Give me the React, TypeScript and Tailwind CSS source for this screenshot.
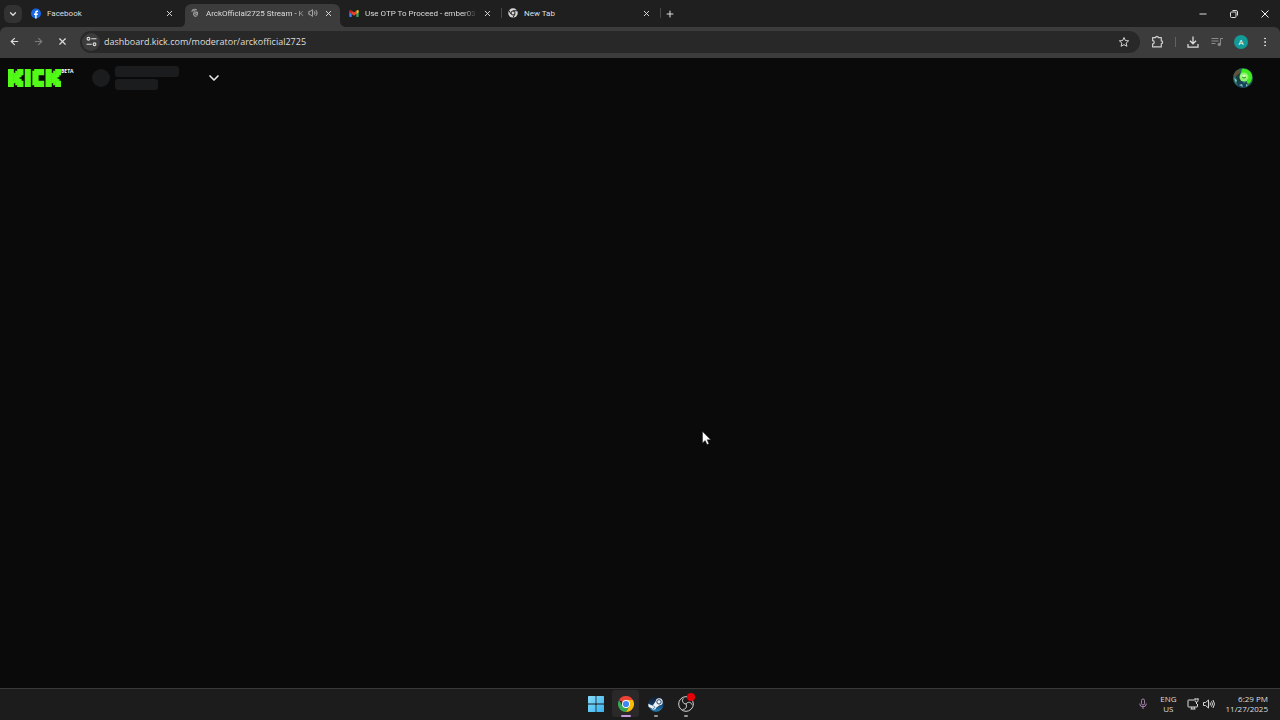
import type { ReactNode } from "react";
import {
  ArrowLeft,
  ArrowRight,
  ChevronDown,
  EllipsisVertical,
  Plus,
  Volume2,
  X,
} from "lucide-react";

function FacebookIcon() {
  return (
    <svg viewBox="0 0 20 20" className="size-[11px]">
      <circle cx="10" cy="10" r="10" fill="#1668e8" />
      <path
        d="M8.3 20v-6.8H6v-3h2.3V8.300c0-2.700 1.500-4.100 3.900-4.100.8 0 1.500.1 1.900.2v2.700h-1.400c-1.100 0-1.500.6-1.500 1.500v1.600h2.800l-.5 3h-2.300V20z"
        fill="#fff"
      />
    </svg>
  );
}

function LoadingPageIcon() {
  return (
    <svg viewBox="0 0 20 20" className="size-2.5" fill="none" stroke="#b8b8b8" strokeWidth="1.6">
      <path d="M4 8V5c2-3 7-3 10-1M5 5l4 1 2-3M8 8h7v4c0 3-2 5-4 5s-4-2-4-5z" />
      <path d="M8 12l6-3M9 15l5-3" />
    </svg>
  );
}

function GmailIcon() {
  return (
    <svg viewBox="0 0 24 18" className="h-[7px] w-2.5">
      <path d="M0 3v13q0 2 2 2h4V7z" fill="#4285f4" />
      <path d="M24 3v13q0 2-2 2h-4V7z" fill="#34a853" />
      <path d="M18 2l3-1.700q3-.7 3 2.700v3l-6 4.500z" fill="#fbbc04" />
      <path d="M6 2L3 .3Q0-.4 0 3v3l6 4.500z" fill="#c5221f" />
      <path d="M6 2l6 4.500L18 2v8.500L12 15l-6-4.500z" fill="#ea4335" />
    </svg>
  );
}

function ChromeMonoIcon() {
  return (
    <svg viewBox="0 0 20 20" className="size-2.5">
      <circle cx="10" cy="10" r="9.500" fill="#d6d6d6" />
      <circle cx="10" cy="10" r="4" fill="#d6d6d6" stroke="#1f1f1f" strokeWidth="2" />
      <path d="M10 5.500h8.500M6.100 12.300L1.900 5M13.900 12.300L9.700 19.500" stroke="#1f1f1f" strokeWidth="2" />
    </svg>
  );
}

function ChromeIcon() {
  return (
    <svg viewBox="0 0 48 48" className="size-4">
      <path d="M24 24L3.200 12A24 24 0 0 1 44.800 12z" fill="#ea4335" />
      <path d="M3.200 12A24 24 0 0 0 24 48l10.400-18L24 24 13.600 30z" fill="#34a853" />
      <path d="M44.800 12A24 24 0 0 1 24 48l10.400-18L24 12z" fill="#fbbc04" />
      <circle cx="24" cy="24" r="12" fill="#fff" />
      <circle cx="24" cy="24" r="9.300" fill="#4285f4" />
    </svg>
  );
}

function WindowsIcon() {
  return (
    <svg viewBox="0 0 16 16" className="size-4">
      <defs>
        <linearGradient id="win" gradientUnits="userSpaceOnUse" x1="0" y1="0" x2="16" y2="16">
          <stop offset="0" stopColor="#86dcfa" />
          <stop offset="1" stopColor="#39b2ee" />
        </linearGradient>
      </defs>
      <rect width="7.600" height="7.600" rx=".6" fill="url(#win)" />
      <rect x="8.400" width="7.600" height="7.600" rx=".6" fill="url(#win)" />
      <rect y="8.400" width="7.600" height="7.600" rx=".6" fill="url(#win)" />
      <rect x="8.400" y="8.400" width="7.600" height="7.600" rx=".6" fill="url(#win)" />
    </svg>
  );
}

function SteamIcon() {
  return (
    <svg viewBox="0 0 24 24" className="size-4">
      <defs>
        <linearGradient id="steam" x1="0" y1="0" x2="0" y2="1">
          <stop offset="0" stopColor="#141a26" />
          <stop offset=".5" stopColor="#123a63" />
          <stop offset="1" stopColor="#2684b8" />
        </linearGradient>
      </defs>
      <circle cx="12" cy="12" r="11.500" fill="url(#steam)" />
      <path d="M.5 11.500l6.500 3 4.500-6.500a5.300 5.300 0 1 1 6 6l-5 3.200q-.8 3.300-4 3.300-2.500 0-3.500-2.500l-4-1.500q-.7-2-.5-5z" fill="#eef3f7" />
      <circle cx="16.500" cy="8.800" r="3.300" fill="#eef3f7" stroke="#17365a" strokeWidth="1.400" />
      <path d="M7 18.500q2.500 1 3-1t-2-2.500" fill="none" stroke="#17547f" strokeWidth="1" />
    </svg>
  );
}

function ObsIcon() {
  return (
    <svg viewBox="0 0 24 24" className="size-4" fill="none" stroke="#d4d4d4" strokeWidth="1.500">
      <circle cx="12" cy="12" r="11" fill="#1b1b1d" />
      <path d="M12 12c-5-.5-6.500-5-4-8.500M12 12c3-4 7.500-3 9 1M12 12c2 4.500-.5 8.500-5 8" />
    </svg>
  );
}

/* Block logo drawn on a 28 x 9 cell grid: [x, y, width, height] */
const logoCells: number[][] = [
  [0, 0, 3, 9], [3, 2, 1, 5], [4, 1, 1, 7], [5, 0, 3, 3], [4, 3, 3, 1], [4, 4, 2, 1], [4, 5, 3, 1], [5, 6, 3, 3],
  [9, 0, 3, 9],
  [13, 1, 3, 7], [14, 0, 5, 3], [14, 6, 5, 3],
  [20, 0, 3, 9], [23, 2, 1, 5], [24, 1, 1, 7], [25, 0, 3, 3], [24, 3, 3, 1], [24, 4, 2, 1], [24, 5, 3, 1], [25, 6, 3, 3],
];

function KickLogo() {
  return (
    <svg viewBox="0 0 28 9" className="h-[18px] w-[53px]" preserveAspectRatio="none" role="img" aria-label="Kick">
      {logoCells.map(([x, y, w, h], i) => (
        <rect key={i} x={x} y={y} width={w} height={h} fill="#53fc18" stroke="#53fc18" strokeWidth=".25" />
      ))}
    </svg>
  );
}

function StreamerAvatar() {
  return (
    <svg viewBox="0 0 20 20" className="size-5 rounded-full">
      <rect width="20" height="20" fill="#27685f" />
      <path d="M0 2h7v6H0z" fill="#61523b" />
      <path d="M3 8l4-3 1 8-4 3z" fill="#1c3d3f" />
      <path d="M9 1c6-1 11 4 10 9s-3 6-6 6l2-6-4-3-4 2z" fill="#3fea1c" />
      <circle cx="11" cy="9" r="4.500" fill="#8cf56d" />
      <path d="M8 8q3-3 6 0l-1 2H9z" fill="#c9ffa5" />
      <path d="M9 9l2 1 2-1" stroke="#278b22" fill="none" />
      <path d="M5 15l4-2 2 3 3-2 2 6H4z" fill="#183e5c" />
      <path d="M1 10l3 2-1 3zM6 17l3-1 1 3zM13 16l2 1-2 2z" fill="#7cc6c0" />
    </svg>
  );
}

type TabProps = {
  icon: ReactNode;
  title: string;
  active?: boolean;
  audio?: boolean;
  fade?: boolean;
  divider?: boolean;
};

function Tab({ icon, title, active, audio, fade, divider }: TabProps) {
  return (
    <div className="relative flex h-full w-[159px] min-w-0 items-center pb-px">
      {active && (
        <svg viewBox="0 0 167 23" className="absolute bottom-0 -left-1 h-[23px] w-[167px]">
          <path d="M0 23q5 0 5-6V7q0-7 7-7h141q7 0 7 7v10q0 6 7 6z" fill="#3c3c3c" />
        </svg>
      )}
      <button role="tab" aria-selected={!!active} className="relative flex min-w-0 flex-1 items-center gap-1.5 pl-1.5">
        <span className="flex w-2.5 shrink-0 justify-center">{icon}</span>
        <span
          className={`min-w-0 flex-1 overflow-hidden pt-0.5 text-left whitespace-nowrap ${
            fade ? "[mask-image:linear-gradient(to_right,#000_88%,transparent)]" : ""
          }`}
        >
          {title}
        </span>
      </button>
      {audio && <Volume2 className="relative size-2.5 shrink-0 text-[#c8c8c8]" />}
      <button aria-label={`Close ${title}`} className="relative mr-2.5 ml-1.5 shrink-0">
        <X className="size-[9px]" strokeWidth={2.5} />
      </button>
      {divider && <span className="absolute right-0 h-2.5 w-px bg-[#484848]" />}
    </div>
  );
}

function ToolButton({ label, children }: { label: string; children: ReactNode }) {
  return (
    <button aria-label={label} className="flex size-6 shrink-0 items-center justify-center">
      {children}
    </button>
  );
}

function TabStrip() {
  return (
    <div className="flex h-[27px] items-center bg-[#1f1f1f] font-[Roboto,'Noto_Sans',sans-serif]">
      <button aria-label="Search tabs" className="mr-[3px] ml-1 flex h-[18px] w-[18px] items-center justify-center rounded-md bg-[#323232]">
        <ChevronDown className="size-2.5" strokeWidth={3} />
      </button>
      <div role="tablist" className="flex h-full min-w-0">
        <Tab icon={<FacebookIcon />} title="Facebook" />
        <Tab icon={<LoadingPageIcon />} title="ArckOfficial2725 Stream - K" active audio fade />
        <Tab icon={<GmailIcon />} title="Use OTP To Proceed - ember03" fade divider />
        <Tab icon={<ChromeMonoIcon />} title="New Tab" divider />
      </div>
      <button aria-label="New tab" className="ml-1">
        <Plus className="size-2.5" strokeWidth={2.5} />
      </button>
      <div className="ml-auto flex">
        <button aria-label="Minimize" className="flex w-[30px] justify-center">
          <svg viewBox="0 0 8 8" className="size-2"><path d="M.5 4h7" stroke="#ddd" /></svg>
        </button>
        <button aria-label="Restore" className="flex w-[31px] justify-center">
          <svg viewBox="0 0 8 8" className="size-2" fill="none" stroke="#ddd">
            <rect x=".5" y="2" width="5.500" height="5.500" rx="1" />
            <path d="M2.500.5H6q1.500 0 1.500 1.500v3.500" />
          </svg>
        </button>
        <button aria-label="Close window" className="flex w-[31px] justify-center">
          <svg viewBox="0 0 8 8" className="size-2"><path d="M.5.5l7 7M7.500.5l-7 7" stroke="#f0f0f0" /></svg>
        </button>
      </div>
    </div>
  );
}

function Toolbar() {
  return (
    <div className="bg-[#1f1f1f]">
      <div className="flex h-[31px] items-center rounded-t-md bg-[#3c3c3c] pr-[3px] pb-0.5 pl-0.5">
        <ToolButton label="Back"><ArrowLeft className="size-[11px]" strokeWidth={2.500} /></ToolButton>
        <ToolButton label="Forward"><ArrowRight className="size-[11px] text-[#7b7b7b]" strokeWidth={2.500} /></ToolButton>
        <ToolButton label="Stop loading"><X className="size-[11px]" strokeWidth={2.500} /></ToolButton>
        <div className="mr-[5px] ml-1.5 flex h-[22px] min-w-0 flex-1 items-center rounded-full bg-[#282828] pr-1 pl-0.5">
          <button aria-label="Site information" className="flex size-[18px] shrink-0 items-center justify-center rounded-full bg-[#3c3c3c]">
            <svg viewBox="0 0 20 20" className="size-[11px]" fill="none" stroke="#dedede" strokeWidth="2">
              <circle cx="4.500" cy="5" r="2.500" />
              <path d="M9.500 5H19M1 15h9.500" />
              <circle cx="15.500" cy="15" r="2.500" />
            </svg>
          </button>
          <input
            aria-label="Address"
            type="text"
            defaultValue="dashboard.kick.com/moderator/arckofficial2725"
            className="ml-1 min-w-0 flex-1 bg-transparent text-[9px] outline-none"
          />
          <ToolButton label="Bookmark this page">
            <svg viewBox="0 0 24 24" className="size-3" fill="none" stroke="#d4d4d4" strokeWidth="2">
              <path d="M12 3l2.700 6.100 6.600.6-5 4.400 1.500 6.500L12 17.200l-5.800 3.400 1.500-6.500-5-4.400 6.600-.6z" />
            </svg>
          </ToolButton>
        </div>
        <ToolButton label="Extensions">
          <svg viewBox="0 0 24 24" className="size-[13px]" fill="none" stroke="#cfcfcf" strokeWidth="2.200">
            <path d="M3 5h5.500a2.500 2.500 0 0 1 5 0H19v6a2.500 2.500 0 0 1 0 5v6H3v-5.500a3 3 0 0 0 0-6z" strokeLinejoin="round" />
          </svg>
        </ToolButton>
        <span className="mr-[5px] ml-1.5 h-2.5 w-px bg-[#626262]" />
        <ToolButton label="Downloads">
          <svg viewBox="0 0 24 24" className="size-3" fill="none" stroke="#dedede" strokeWidth="2.500">
            <path d="M12 1v14M6 9.500l6 6 6-6M2 16v6h20v-6" />
          </svg>
        </ToolButton>
        <ToolButton label="Media controls">
          <svg viewBox="0 0 24 24" className="size-3" fill="none" stroke="#8a8a8a" strokeWidth="2">
            <path d="M1 5h14M1 10h14M1 15h8M19 17V5h5" />
            <circle cx="16.500" cy="17" r="2.500" fill="#8a8a8a" />
          </svg>
        </ToolButton>
        <ToolButton label="Profile">
          <span className="flex size-[14px] items-center justify-center rounded-full bg-[#149a96] text-[8px] text-white">A</span>
        </ToolButton>
        <ToolButton label="Menu"><EllipsisVertical className="size-3" /></ToolButton>
      </div>
    </div>
  );
}

function Dashboard() {
  return (
    <main className="flex-1 bg-[#0a0a0a]">
      <header className="flex h-10 items-center pr-[27px] pl-2">
        <a href="#home" className="flex items-start">
          <KickLogo />
          <span className="text-[5px] leading-[5px] font-bold text-white">BETA</span>
        </a>
        <button aria-label="Select channel" className="ml-[18px] flex items-center">
          <span className="size-[18px] rounded-full bg-[#1b1c1e]" />
          <span className="ml-[5px] flex w-16 flex-col gap-0.5">
            <span className="h-[11px] w-16 rounded-[3px] bg-[#1b1c1e]" />
            <span className="h-[11px] w-[43px] rounded-[3px] bg-[#1b1c1e]" />
          </span>
          <ChevronDown className="ml-[27px] size-4 text-[#e6e6e6]" strokeWidth={2.500} />
        </button>
        <button aria-label="Account" className="ml-auto"><StreamerAvatar /></button>
      </header>
    </main>
  );
}

function Taskbar() {
  return (
    <footer className="grid h-8 grid-cols-[1fr_auto_1fr] items-center border-t border-[#3a3a3a] bg-[#1c1c1c] pb-0.5">
      <div />
      <nav aria-label="Taskbar" className="flex gap-[3px] pl-px">
        <button aria-label="Start" className="flex h-[27px] w-[27px] items-center justify-center"><WindowsIcon /></button>
        <button aria-label="Chrome" className="relative flex h-[27px] w-[27px] items-center justify-center rounded-[3px] bg-[#2a2829]">
          <ChromeIcon />
          <span className="absolute bottom-0 h-0.5 w-2.5 rounded-full bg-[#c59add]" />
        </button>
        <button aria-label="Steam" className="relative flex h-[27px] w-[27px] items-center justify-center">
          <SteamIcon />
          <span className="absolute bottom-0 h-0.5 w-1 rounded-full bg-[#969696]" />
        </button>
        <button aria-label="OBS" className="relative flex h-[27px] w-[27px] items-center justify-center">
          <ObsIcon />
          <span className="absolute top-[3px] right-1 size-2 rounded-full bg-[#e80008]" />
          <span className="absolute bottom-0 h-0.5 w-1 rounded-full bg-[#969696]" />
        </button>
      </nav>
      <div className="flex items-center justify-end pr-3 text-[8px] leading-[10px]">
        <button aria-label="Microphone in use">
          <svg viewBox="0 0 20 24" className="h-3 w-2.5" fill="none" stroke="#b48bc0" strokeWidth="1.800">
            <rect x="7" y="2" width="6" height="12" rx="3" />
            <path d="M3.500 11v1q0 5.500 6.500 5.500t6.500-5.500v-1M10 17.500V22" />
          </svg>
        </button>
        <button className="ml-3 text-center">ENG<br />US</button>
        <button aria-label="Network and sound" className="ml-2.5 flex items-center gap-1">
          <svg viewBox="0 0 24 24" className="size-3" fill="none" stroke="#dedede" strokeWidth="2">
            <path d="M14 4H3q-1 0-1 1v12q0 1 1 1h17q1 0 1-1v-5M7 22h10M9.500 18v4M14.500 18v4" />
            <path d="M16 1v4q0 3 3 3t3-3V1M15 2h8M19 8v4" />
          </svg>
          <svg viewBox="0 0 24 24" className="size-3" fill="none" stroke="#dedede" strokeWidth="1.900">
            <path d="M1 9h4l6-5v16l-6-5H1zM14 9q2 3 0 6M17 6.500q4 5.500 0 11M20 4q6 8 0 16" />
          </svg>
        </button>
        <button className="ml-[11px] text-right">6:29 PM<br />11/27/2025</button>
      </div>
    </footer>
  );
}

export default function App() {
  return (
    <div className="relative flex min-h-screen flex-col bg-[#0a0a0a] font-['Open_Sans','Noto_Sans',sans-serif] text-[8px] leading-3 text-[#dedede]">
      <TabStrip />
      <Toolbar />
      <Dashboard />
      <Taskbar />
      <svg viewBox="0 0 9 14" className="pointer-events-none absolute top-[431px] left-[702px] h-3.5 w-[9px]">
        <path d="M.5.500v11.500l2.700-2.500 1.800 4 1.900-.8-1.800-3.900h3.600z" fill="#fff" stroke="#222" strokeWidth=".5" />
      </svg>
    </div>
  );
}
